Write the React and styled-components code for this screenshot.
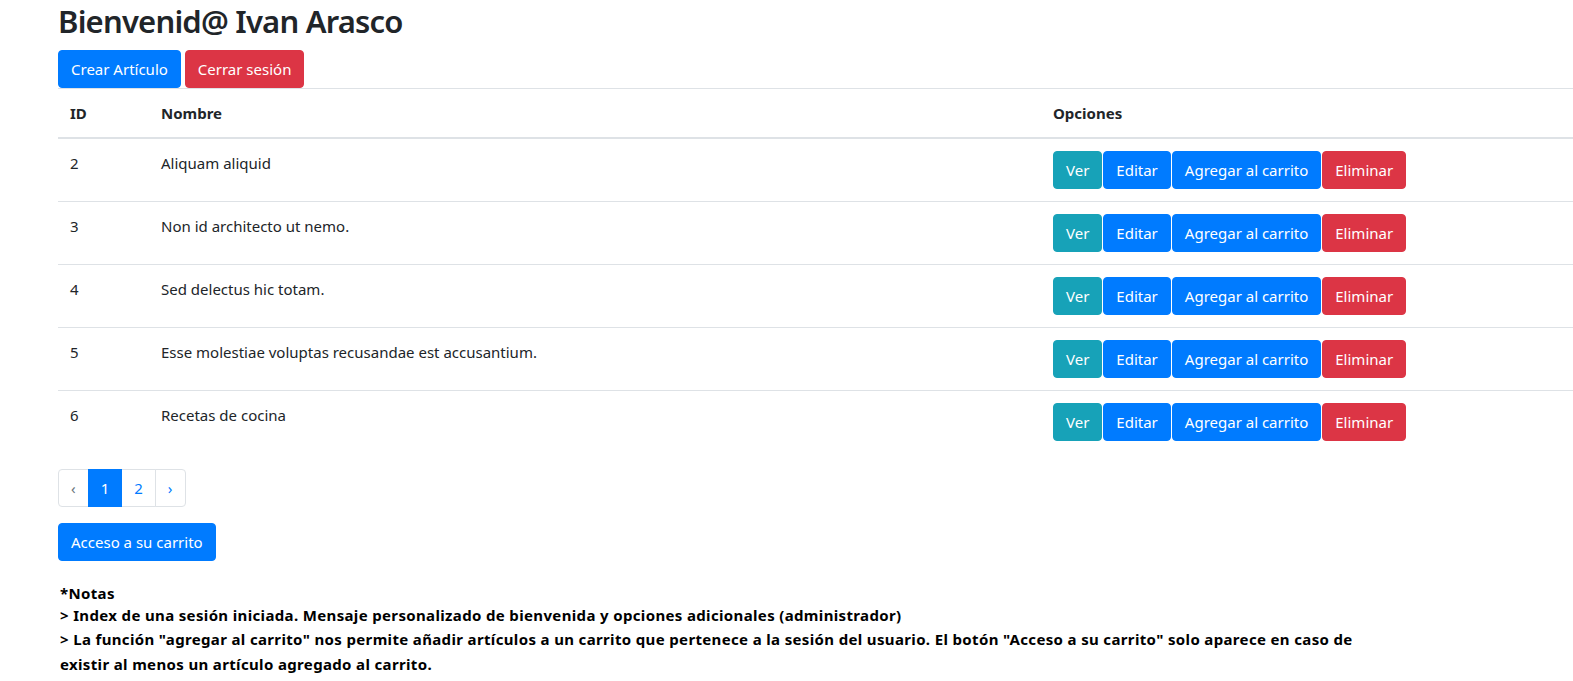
import React from 'react';
import styled, { createGlobalStyle } from 'styled-components';

const GlobalStyle = createGlobalStyle`
  html, body {
    margin: 0;
    padding: 0;
    background: #fff;
  }
  body {
    font-family: "Noto Sans", "Open Sans", sans-serif;
    font-size: 15px;
    line-height: 24px;
    color: #212529;
  }
  * {
    box-sizing: border-box;
  }
`;

const Page = styled.div`
  padding-left: 58px;
`;

const Title = styled.h1`
  margin: 0 0 8px;
  font-size: 31px;
  font-weight: 600;
  letter-spacing: -0.8px;
  line-height: 42px;
  color: #212529;
`;

const Toolbar = styled.div`
  display: flex;
  gap: 4px;
`;

const colors = {
  primary: '#007bff',
  danger: '#dc3545',
  info: '#17a2b8',
};

const Button = styled.button`
  font-family: inherit;
  font-size: 15px;
  line-height: 24px;
  padding: 6px 12px;
  border: 1px solid ${(p) => colors[p.$variant || 'primary']};
  border-radius: 4px;
  background: ${(p) => colors[p.$variant || 'primary']};
  color: #fff;
  cursor: pointer;
  white-space: nowrap;
`;

const Table = styled.table`
  width: 100%;
  table-layout: fixed;
  border-collapse: collapse;
  margin-bottom: 16px;
`;

const Th = styled.th`
  text-align: left;
  font-weight: 700;
  padding: 12px;
  border-top: 1px solid #dee2e6;
  border-bottom: 2px solid #dee2e6;
  width: ${(p) => p.$width || 'auto'};
`;

const Td = styled.td`
  padding: 12px;
  vertical-align: top;
  border-top: 1px solid #dee2e6;
`;

const Options = styled.div`
  display: flex;
  gap: 1px;
`;

const Pagination = styled.ul`
  display: flex;
  list-style: none;
  margin: 0 0 16px;
  padding: 0;
`;

const PageLink = styled.li`
  padding: 6px 12px;
  line-height: 24px;
  font-size: 15px;
  margin-left: -1px;
  border: 1px solid ${(p) => (p.$active ? '#007bff' : '#dee2e6')};
  background: ${(p) => (p.$active ? '#007bff' : '#fff')};
  color: ${(p) => (p.$active ? '#fff' : p.$disabled ? '#6c757d' : '#007bff')};
  position: relative;
  z-index: ${(p) => (p.$active ? 1 : 0)};

  &:first-child {
    margin-left: 0;
    border-radius: 4px 0 0 4px;
  }
  &:last-child {
    border-radius: 0 4px 4px 0;
  }
`;

const Notes = styled.div`
  margin-top: 22px;
  padding-left: 2px;
  max-width: 1300px;
  font-family: "Noto Sans", sans-serif;
  font-weight: 700;
  font-size: 15px;
  letter-spacing: 0.35px;
  color: #000;
`;

const NoteLine = styled.p`
  margin: 0;
  line-height: ${(p) => p.$lh || '25px'};
`;

const rows = [
  { id: 2, nombre: 'Aliquam aliquid' },
  { id: 3, nombre: 'Non id architecto ut nemo.' },
  { id: 4, nombre: 'Sed delectus hic totam.' },
  { id: 5, nombre: 'Esse molestiae voluptas recusandae est accusantium.' },
  { id: 6, nombre: 'Recetas de cocina' },
];

export default function App() {
  return (
    <Page>
      <GlobalStyle />
      <Title>Bienvenid@ Ivan Arasco</Title>
      <Toolbar>
        <Button>Crear Artículo</Button>
        <Button $variant="danger">Cerrar sesión</Button>
      </Toolbar>
      <Table>
        <thead>
          <tr>
            <Th $width="91px">ID</Th>
            <Th $width="892px">Nombre</Th>
            <Th>Opciones</Th>
          </tr>
        </thead>
        <tbody>
          {rows.map((r) => (
            <tr key={r.id}>
              <Td>{r.id}</Td>
              <Td>{r.nombre}</Td>
              <Td>
                <Options>
                  <Button $variant="info">Ver</Button>
                  <Button>Editar</Button>
                  <Button>Agregar al carrito</Button>
                  <Button $variant="danger">Eliminar</Button>
                </Options>
              </Td>
            </tr>
          ))}
        </tbody>
      </Table>
      <Pagination>
        <PageLink $disabled>‹</PageLink>
        <PageLink $active>1</PageLink>
        <PageLink>2</PageLink>
        <PageLink>›</PageLink>
      </Pagination>
      <Button>Acceso a su carrito</Button>
      <Notes>
        <NoteLine $lh="20px">*Notas</NoteLine>
        <NoteLine $lh="24px">
          &gt; Index de una sesión iniciada. Mensaje personalizado de bienvenida y opciones adicionales (administrador)
        </NoteLine>
        <NoteLine>
          &gt; La función "agregar al carrito" nos permite añadir artículos a un carrito que pertenece a la sesión del
          usuario. El botón "Acceso a su carrito" solo aparece en caso de existir al menos un artículo agregado al
          carrito.
        </NoteLine>
      </Notes>
    </Page>
  );
}
